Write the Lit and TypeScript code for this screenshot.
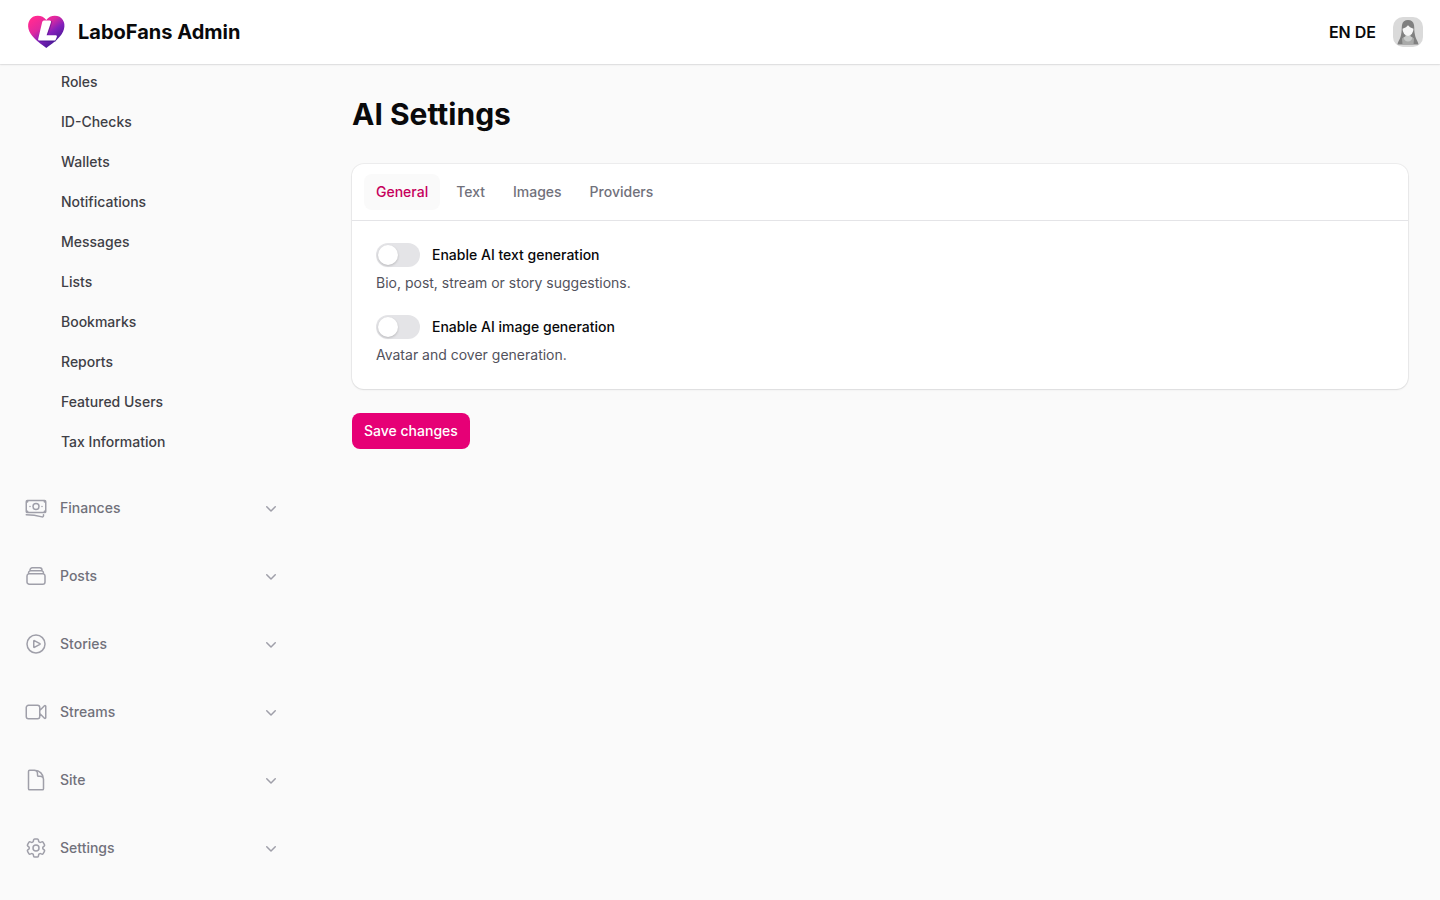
import { LitElement, html, css, svg } from "lit";
import { customElement, state } from "lit/decorators.js";

const icons: Record<string, string> = {
  Finances:
    "M2.25 18.75a60.07 60.07 0 0 1 15.797 2.101c.727.198 1.453-.342 1.453-1.096V18.75M3.75 4.5v.75A.75.75 0 0 1 3 6h-.75m0 0v-.375c0-.621.504-1.125 1.125-1.125H20.25M2.25 6v9m18-10.5v.75c0 .414.336.75.75.75h.75m-1.5-1.5h.375c.621 0 1.125.504 1.125 1.125v9.75c0 .621-.504 1.125-1.125 1.125h-.375m1.5-1.5H21a.75.75 0 0 0-.75.75v.75m0 0H3.75m0 0h-.375a1.125 1.125 0 0 1-1.125-1.125V15m1.5 1.5v-.75A.75.75 0 0 0 3 15h-.75M15 10.5a3 3 0 1 1-6 0 3 3 0 0 1 6 0Zm3 0h.008v.008H18V10.5Zm-12 0h.008v.008H6V10.5Z",
  Posts:
    "M6 6.878V6a2.25 2.25 0 0 1 2.25-2.25h7.5A2.25 2.25 0 0 1 18 6v.878m-12 0c.235-.083.487-.128.75-.128h10.5c.263 0 .515.045.75.128m-12 0A2.25 2.25 0 0 0 4.5 9v.878m13.5-3A2.25 2.25 0 0 1 19.5 9v.878m0 0a2.246 2.246 0 0 0-.75-.128H5.25c-.263 0-.515.045-.75.128m15 0A2.25 2.25 0 0 1 21 12v6a2.25 2.25 0 0 1-2.25 2.25H5.25A2.25 2.25 0 0 1 3 18v-6c0-.98.626-1.813 1.5-2.122",
  Stories:
    "M21 12a9 9 0 1 1-18 0 9 9 0 0 1 18 0Z M15.91 11.672a.375.375 0 0 1 0 .656l-5.603 3.113a.375.375 0 0 1-.557-.328V8.887c0-.286.307-.466.557-.327l5.603 3.112Z",
  Streams:
    "m15.75 10.5 4.72-4.72a.75.75 0 0 1 1.28.53v11.38a.75.75 0 0 1-1.28.53l-4.72-4.72M4.5 18.75h9a2.25 2.25 0 0 0 2.25-2.25v-9a2.25 2.25 0 0 0-2.25-2.25h-9A2.25 2.25 0 0 0 2.25 7.5v9a2.25 2.25 0 0 0 2.25 2.25Z",
  Site:
    "M19.5 14.25v-2.625a3.375 3.375 0 0 0-3.375-3.375h-1.5A1.125 1.125 0 0 1 13.5 7.125v-1.5a3.375 3.375 0 0 0-3.375-3.375H8.25m2.25 0H5.625c-.621 0-1.125.504-1.125 1.125v17.25c0 .621.504 1.125 1.125 1.125h12.75c.621 0 1.125-.504 1.125-1.125V11.25a9 9 0 0 0-9-9Z",
  Settings:
    "M9.594 3.94c.09-.542.56-.94 1.11-.94h2.593c.55 0 1.02.398 1.11.94l.213 1.281c.063.374.313.686.645.87.074.04.147.083.22.127.325.196.72.257 1.075.124l1.217-.456a1.125 1.125 0 0 1 1.37.49l1.296 2.247a1.125 1.125 0 0 1-.26 1.431l-1.003.827c-.293.241-.438.613-.43.992a7.723 7.723 0 0 1 0 .255c-.008.378.137.75.43.991l1.004.827c.424.35.534.955.26 1.43l-1.298 2.247a1.125 1.125 0 0 1-1.369.491l-1.217-.456c-.355-.133-.75-.072-1.076.124a6.47 6.47 0 0 1-.22.128c-.331.183-.581.495-.644.869l-.213 1.281c-.09.543-.56.94-1.11.94h-2.594c-.55 0-1.019-.398-1.11-.94l-.213-1.281c-.062-.374-.312-.686-.644-.87a6.52 6.52 0 0 1-.22-.127c-.325-.196-.72-.257-1.076-.124l-1.217.456a1.125 1.125 0 0 1-1.369-.49l-1.297-2.247a1.125 1.125 0 0 1 .26-1.431l1.004-.827c.292-.24.437-.613.43-.991a6.932 6.932 0 0 1 0-.255c.007-.38-.138-.751-.43-.992l-1.004-.827a1.125 1.125 0 0 1-.26-1.43l1.297-2.247a1.125 1.125 0 0 1 1.37-.491l1.216.456c.356.133.751.072 1.076-.124.072-.044.146-.086.22-.128.332-.183.582-.495.644-.869l.214-1.28Z M15 12a3 3 0 1 1-6 0 3 3 0 0 1 6 0Z",
};

const userLinks = [
  "Roles",
  "ID-Checks",
  "Wallets",
  "Notifications",
  "Messages",
  "Lists",
  "Bookmarks",
  "Reports",
  "Featured Users",
  "Tax Information",
];

const tabs = ["General", "Text", "Images", "Providers"];

const toggles = [
  { id: "ai-text", label: "Enable AI text generation", help: "Bio, post, stream or story suggestions." },
  { id: "ai-image", label: "Enable AI image generation", help: "Avatar and cover generation." },
];

@customElement("app-root")
export class AppRoot extends LitElement {
  @state() private tab = "General";

  static styles = css`
    :host {
      display: flex;
      flex-direction: column;
      min-height: 100vh;
      background: #fafafa;
      color: #09090b;
      font: 400 14px/20px Inter, sans-serif;
    }
    *,
    *::before {
      box-sizing: border-box;
    }
    a {
      color: inherit;
      text-decoration: none;
    }
    button {
      font: inherit;
      font-weight: 500;
      border: 0;
      background: none;
      cursor: pointer;
    }
    svg {
      display: block;
      flex: none;
    }
    .topbar {
      display: flex;
      align-items: center;
      justify-content: space-between;
      height: 64px;
      padding: 0 16px 0 24px;
      background: #fff;
      box-shadow: 0 0 0 1px rgba(9, 9, 11, 0.05), 0 1px 2px rgba(0, 0, 0, 0.08);
      z-index: 1;
    }
    .brand {
      display: flex;
      align-items: center;
      gap: 10px;
      font-size: 20px;
      font-weight: 700;
    }
    .account {
      display: flex;
      align-items: center;
      gap: 16px;
    }
    .langs {
      display: flex;
      gap: 4px;
      font-size: 16px;
      font-weight: 600;
    }
    .avatar {
      padding: 0;
    }
    .layout {
      display: flex;
      flex: 1;
    }
    .sidebar {
      flex: none;
      display: flex;
      flex-direction: column;
      gap: 28px;
      width: 320px;
      padding: 0 32px 32px 24px;
    }
    .links {
      display: flex;
      flex-direction: column;
      gap: 4px;
      margin: 0;
      padding: 0;
      list-style: none;
    }
    .link {
      display: block;
      padding: 8px 8px 8px 37px;
      font-weight: 500;
      color: #3f3f46;
    }
    .group {
      display: flex;
      align-items: center;
      gap: 12px;
      height: 40px;
      padding: 0 7px 0 0;
      color: #71717b;
      text-align: left;
    }
    .group-label {
      flex: 1;
    }
    .icon {
      color: #9f9fa9;
    }
    .main {
      flex: 1;
      min-width: 0;
      display: flex;
      flex-direction: column;
      padding: 32px;
    }
    .title {
      margin: 0 0 32px;
      font-size: 30px;
      line-height: 36px;
      font-weight: 700;
    }
    .form {
      display: flex;
      flex-direction: column;
      align-items: flex-start;
      gap: 24px;
    }
    .card {
      align-self: stretch;
      background: #fff;
      border-radius: 12px;
      box-shadow: 0 0 0 1px rgba(9, 9, 11, 0.05), 0 1px 2px rgba(0, 0, 0, 0.08);
    }
    .tabs {
      display: flex;
      gap: 4px;
      padding: 10px 12px;
      border-bottom: 1px solid #e4e4e7;
    }
    .tab {
      padding: 8px 12px;
      border-radius: 8px;
      color: #71717b;
    }
    .tab[aria-selected="true"] {
      background: #fafafa;
      color: #c6005c;
    }
    .panel {
      display: flex;
      flex-direction: column;
      gap: 24px;
      padding: 24px;
    }
    .field {
      display: flex;
      flex-direction: column;
      align-items: flex-start;
      gap: 8px;
    }
    .field-row {
      display: flex;
      align-items: center;
      gap: 12px;
      height: 20px;
      font-weight: 500;
    }
    .switch {
      appearance: none;
      flex: none;
      width: 44px;
      height: 24px;
      margin: 0;
      padding: 2px;
      border-radius: 12px;
      background: #e4e4e7;
      cursor: pointer;
    }
    .switch::before {
      content: "";
      display: block;
      width: 20px;
      height: 20px;
      border-radius: 10px;
      background: #fff;
      box-shadow: 0 1px 3px rgba(0, 0, 0, 0.1), 0 1px 2px rgba(0, 0, 0, 0.1);
    }
    .switch:checked {
      background: #e60076;
    }
    .switch:checked::before {
      margin-left: 20px;
    }
    .help {
      margin: 0;
      color: #52525c;
    }
    .save {
      padding: 8px 12px;
      border-radius: 8px;
      background: #e60076;
      color: #fff;
    }
  `;

  private logo() {
    return svg`<svg width="44" height="40" viewBox="0 0 44 40" aria-hidden="true">
      <defs>
        <linearGradient id="heart" x1="0.15" y1="0.1" x2="0.75" y2="0.85">
          <stop offset="0" stop-color="#ff2a92" />
          <stop offset="0.35" stop-color="#e0299f" />
          <stop offset="0.65" stop-color="#8420bb" />
          <stop offset="1" stop-color="#4a1a98" />
        </linearGradient>
      </defs>
      <path fill="url(#heart)" d="M22.300 36 C17.500 32.500 10.500 27.500 6.800 22 C2.500 15.500 3.500 8 9 4.800 C13.500 2.600 19.500 3.800 22.300 8 C25.100 3.800 31.100 2.600 35.600 4.800 C41.100 8 42.100 15.500 37.800 22 C34.100 27.500 27.100 32.500 22.300 36Z" />
      <path fill="#3e148c" opacity=".5" d="M13.500 27.500 L15.500 29.800 H31.500 L34.500 24 L32.500 27 Z" />
      <path fill="#33107c" opacity=".4" d="M26.800 8.600 L28.300 9.800 L24 23.300 H21.500Z" />
      <path fill="#fff" d="M19.900 8.400 H25.800 Q27.600 8.400 27 10.200 L22.600 23.300 H31.800 Q33.400 23.300 32.900 24.800 L31.800 27.400 Q31.300 28.600 30 28.600 H15.600 Q13.600 28.600 14.300 26.500 L18.200 9.900 Q18.600 8.400 19.900 8.400Z" />
    </svg>`;
  }

  private avatar() {
    return svg`<svg width="32" height="32" viewBox="0 0 32 32" aria-hidden="true">
      <rect x="1" y="1" width="30" height="30" rx="10" fill="#dadada" />
      <path fill="#808080" d="M5.500 28.500 C6 25 8 24 9 19 C10 15 9.500 12 10 9 C10.500 5.500 12.800 4 16 4 C19.200 4 21.500 5.500 22 9 C22.500 12 22 15 23 19 C24 24 26 25 26.500 28.500Z" />
      <path fill="#a9aaa9" d="M10.500 28.500 L10 22.500 L14 20 H18 L22 22.500 L21.500 28.500Z" />
      <path fill="#c9cbca" d="M13.500 18 H18.500 V20.500 L20.500 21.500 Q19.500 25.500 16 25.500 Q12.500 25.500 11.500 21.500 L13.500 20.500Z" />
      <path fill="#f6f6f6" d="M16 9.200 L18 11.200 L21.500 12.700 Q21.300 18.700 16 20 Q10.700 18.700 10.500 12.700 L14 11.200Z" />
    </svg>`;
  }

  render() {
    return html`
      <header class="topbar">
        <a class="brand" href="#">${this.logo()}<span>LaboFans Admin</span></a>
        <div class="account">
          <nav class="langs" aria-label="Language"><a href="#en">EN</a><a href="#de">DE</a></nav>
          <button class="avatar" type="button" aria-label="User menu">${this.avatar()}</button>
        </div>
      </header>
      <div class="layout">
        <nav class="sidebar" aria-label="Main">
          <ul class="links">
            ${userLinks.map((name) => html`<li><a class="link" href="#">${name}</a></li>`)}
          </ul>
          ${Object.entries(icons).map(
            ([name, path]) => html`
              <button class="group" type="button" aria-expanded="false">
                <svg class="icon" width="24" height="24" viewBox="0 0 24 24" fill="none" stroke="currentColor" stroke-width="1.5" stroke-linecap="round" stroke-linejoin="round" aria-hidden="true">
                  <path d=${path} />
                </svg>
                <span class="group-label">${name}</span>
                <svg class="icon" width="20" height="20" viewBox="0 0 20 20" fill="currentColor" aria-hidden="true">
                  <path fill-rule="evenodd" clip-rule="evenodd" d="M5.220 8.220a.75.75 0 0 1 1.060 0L10 11.940l3.720-3.720a.75.75 0 1 1 1.060 1.060l-4.250 4.250a.75.75 0 0 1-1.060 0L5.220 9.280a.75.75 0 0 1 0-1.060Z" />
                </svg>
              </button>
            `
          )}
        </nav>
        <main class="main">
          <h1 class="title">AI Settings</h1>
          <form class="form" @submit=${(e: Event) => e.preventDefault()}>
            <section class="card">
              <div class="tabs" role="tablist">
                ${tabs.map(
                  (name) => html`<button class="tab" type="button" role="tab" aria-selected=${name === this.tab ? "true" : "false"} @click=${() => (this.tab = name)}>${name}</button>`
                )}
              </div>
              <div class="panel" role="tabpanel">
                ${toggles.map(
                  (t) => html`
                    <div class="field">
                      <div class="field-row">
                        <input class="switch" type="checkbox" role="switch" id=${t.id} aria-describedby="${t.id}-help" />
                        <label for=${t.id}>${t.label}</label>
                      </div>
                      <p class="help" id="${t.id}-help">${t.help}</p>
                    </div>
                  `
                )}
              </div>
            </section>
            <button class="save" type="submit">Save changes</button>
          </form>
        </main>
      </div>
    `;
  }
}
